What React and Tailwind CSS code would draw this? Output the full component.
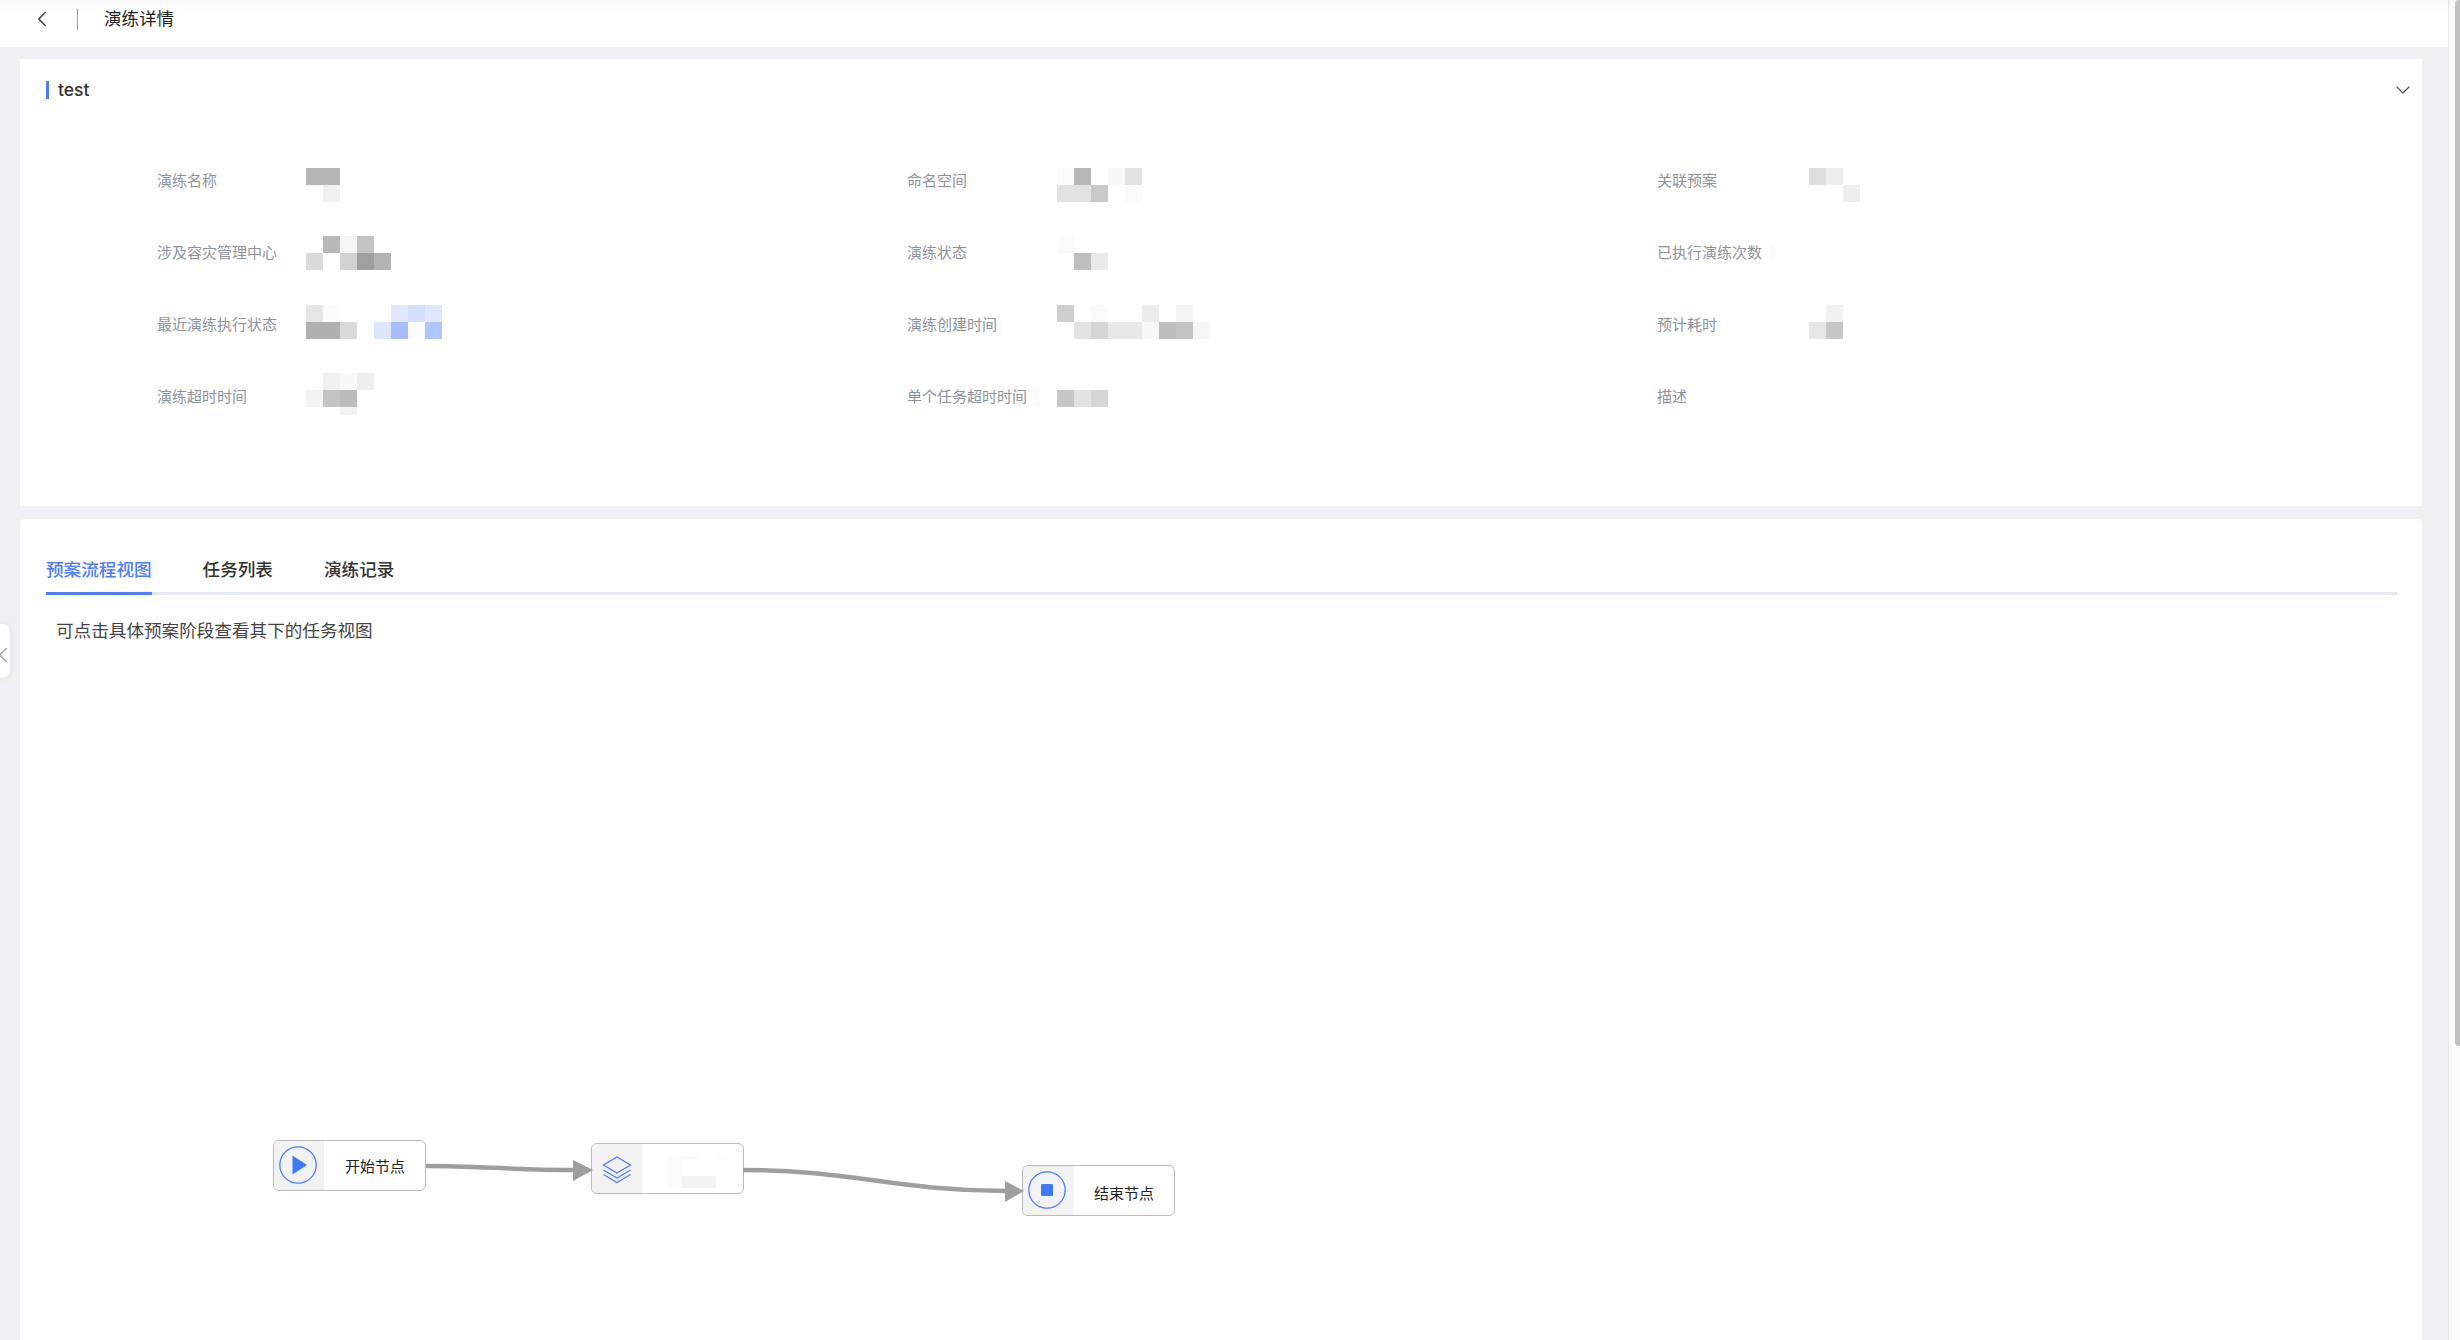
import { ChevronLeft, ChevronDown } from "lucide-react";

const cellColors = {
  _: "bg-transparent",
  a: "bg-[#b5b5b5]",
  b: "bg-[#f0f0f0]",
  c: "bg-[#b8b8b8]",
  d: "bg-[#f6f6f6]",
  e: "bg-[#c3c3c3]",
  f: "bg-[#d9dada]",
  g: "bg-[#d2d2d2]",
  h: "bg-[#9f9f9f]",
  i: "bg-[#b3b3b3]",
  j: "bg-[#e6e6e6]",
  k: "bg-[#fbfbfb]",
  l: "bg-[#dfe8fd]",
  m: "bg-[#d3dffc]",
  n: "bg-[#dfe7fc]",
  o: "bg-[#b0b0b0]",
  p: "bg-[#d8d9d8]",
  q: "bg-[#dde5fb]",
  r: "bg-[#a5bdf8]",
  s: "bg-[#fbfcff]",
  t: "bg-[#aec6fb]",
  u: "bg-[#f8f8f8]",
  v: "bg-[#eeeeee]",
  w: "bg-[#f3f3f3]",
  x: "bg-[#c4c4c4]",
  y: "bg-[#bbbbbb]",
  z: "bg-[#e2e2e2]",
  A: "bg-[#c8c9c8]",
  B: "bg-[#fafafa]",
  C: "bg-[#bebebe]",
  D: "bg-[#eaeaea]",
  E: "bg-[#cfcfcf]",
  F: "bg-[#ececec]",
  G: "bg-[#f4f4f4]",
  H: "bg-[#d6d6d6]",
  I: "bg-[#e8e8e8]",
  J: "bg-[#f7f7f7]",
  K: "bg-[#bdbdbd]",
  L: "bg-[#f5f5f5]",
  M: "bg-[#c6c6c6]",
  N: "bg-[#dedede]",
};

const columns = [
  {
    labelWidth: "w-[149px]",
    items: [
      { label: "演练名称", blocks: ["aa", "_b"], offset: "mt-0" },
      { label: "涉及容灾管理中心", blocks: ["_cde", "f_ghi"], offset: "-mt-1" },
      { label: "最近演练执行状态", blocks: ["jk___lmn", "oop_qrst"], offset: "-mt-[7px]" },
      { label: "演练超时时间", blocks: ["_buv", "wxy", "__w"], offset: "-mt-[11px]", tail: true },
    ],
  },
  {
    labelWidth: "w-[150px]",
    items: [
      { label: "命名空间", blocks: ["kc_uz", "zzA_B"], offset: "mt-0" },
      { label: "演练状态", blocks: ["B", "_CD"], offset: "-mt-1" },
      { label: "演练创建时间", blocks: ["E_B__F_G", "_zHIIJKeL"], offset: "-mt-[7px]" },
      {
        label: "单个任务超时时间",
        blocks: ["_", "MzH"],
        offset: "-mt-[11px]",
        smudge: "left-[126px] top-[3px] h-[17px] w-[7px] bg-[#f9f9f9]",
      },
    ],
  },
  {
    labelWidth: "w-[152px]",
    items: [
      { label: "关联预案", blocks: ["Nv", "__v"], offset: "mt-0" },
      {
        label: "已执行演练次数",
        blocks: [],
        offset: "mt-0",
        smudge: "left-[113px] top-[3px] h-[17px] w-[5px] bg-[#fafafa]",
      },
      { label: "预计耗时", blocks: ["_b", "jM"], offset: "-mt-[7px]" },
      { label: "描述", blocks: [], offset: "mt-0" },
    ],
  },
];

const tabs = ["预案流程视图", "任务列表", "演练记录"];

function Mosaic({ rows, offset, tail }) {
  return (
    <div className={`flex flex-col ${offset}`}>
      {rows.map((row, i) => (
        <div key={i} className={`flex ${tail && i === 2 ? "h-[8px]" : "h-[17px]"}`}>
          {row.split("").map((c, j) => (
            <div key={j} className={`h-full w-[17px] ${cellColors[c]}`} />
          ))}
        </div>
      ))}
    </div>
  );
}

function FlowNode({ pos, label, textPad, children, extra }) {
  return (
    <div
      className={`absolute flex h-[51px] w-[153px] overflow-hidden rounded-[6px] border-[1.5px] border-[#b9b9b9] bg-white ${pos}`}
    >
      <div className="flex w-[50px] shrink-0 items-center justify-center bg-[#f2f2f2]">{children}</div>
      {label && (
        <span className={`ml-[21px] text-[15px] leading-[22px] text-[#222] ${textPad}`}>{label}</span>
      )}
      {extra}
    </div>
  );
}

function PlayIcon() {
  return (
    <svg className="-mt-px -ml-[2px]" width="40" height="40" viewBox="0 0 40 40" fill="none">
      <circle cx="20" cy="20" r="18.2" stroke="#4d7cfe" strokeWidth="1.3" />
      <path d="M14.5 10.5 29 20 14.5 29.5Z" fill="#3f78fc" />
    </svg>
  );
}

function LayersIcon() {
  return (
    <svg width="30" height="30" viewBox="0 0 30 30" fill="none" stroke="#4d7cfe" strokeWidth="1.2">
      <path d="M15 3 28.5 11 15 19 1.5 11Z" />
      <path d="M1.5 16 15 24 28.5 16" />
      <path d="M1.5 20.5 15 28.5 28.5 20.5" />
    </svg>
  );
}

function StopIcon() {
  return (
    <svg className="-mt-px -ml-[2px]" width="40" height="40" viewBox="0 0 40 40" fill="none">
      <circle cx="20" cy="20" r="18.2" stroke="#4d7cfe" strokeWidth="1.3" />
      <rect x="14" y="14" width="12" height="12" rx="1" fill="#3f78fc" />
    </svg>
  );
}

export default function App() {
  return (
    <div className="relative flex h-[1340px] w-[2460px] overflow-hidden bg-[#eef0f5] font-['Inter','Noto_Sans_CJK_SC',sans-serif]">
      <main className="flex w-[2448px] shrink-0 flex-col">
        {/* Top bar */}
        <header className="flex h-[47px] shrink-0 items-center bg-gradient-to-b from-[#f9f9f9] to-white to-[30%] pb-[9px]">
          <ChevronLeft size={26} strokeWidth={1.5} className="ml-[29px] shrink-0 text-[#444]" />
          <div className="ml-[22px] h-[21px] w-px bg-[#9aa1ad]" />
          <h1 className="ml-[26px] text-[17.5px] font-normal leading-[24px] text-[#222]">演练详情</h1>
        </header>

        {/* Basic info card */}
        <section className="mt-[12px] mr-[26px] ml-[20px] h-[447px] shrink-0 bg-white">
          <div className="flex items-center pt-[19px] pr-[7px] pl-[26px]">
            <div className="h-[18px] w-[3px] bg-[#4d7cfe]" />
            <span className="ml-[9px] text-[17.5px] font-medium leading-[22px] text-[#333]">test</span>
            <ChevronDown size={24} strokeWidth={1.2} className="ml-auto shrink-0 text-[#555]" />
          </div>
          <div className="mt-[66px] ml-[137px] grid grid-cols-[750px_750px_750px]">
            {columns.map((col, i) => (
              <div key={i}>
                {col.items.map((item) => (
                  <div key={item.label} className="flex h-[72px] items-start">
                    <span
                      className={`relative mt-[2px] shrink-0 text-[15px] leading-[22px] text-[#8e929e] ${col.labelWidth}`}
                    >
                      {item.label}
                      {item.smudge && <i className={`absolute ${item.smudge}`} />}
                    </span>
                    <Mosaic rows={item.blocks} offset={item.offset} tail={item.tail} />
                  </div>
                ))}
              </div>
            ))}
          </div>
        </section>

        {/* Tabs and flow card */}
        <section className="relative mt-[13px] mr-[26px] ml-[20px] flex-1 rounded-t-[5px] bg-white pr-[25px] pl-[26px]">
          <nav className="mt-[37px] flex h-[39px] gap-[51px] border-b-[3px] border-[#e4e6f0]">
            {tabs.map((tab, i) => (
              <span
                key={tab}
                className={`h-[39px] text-[17.6px] font-medium leading-[27px] ${
                  i === 0 ? "border-b-[3px] border-[#4d7cfe] text-[#4d7cfe]" : "text-[#333]"
                }`}
              >
                {tab}
              </span>
            ))}
          </nav>
          <p className="mt-[23px] ml-[10px] text-[17.6px] leading-[26px] text-[#444]">可点击具体预案阶段查看其下的任务视图</p>

          {/* Flow diagram */}
          <FlowNode pos="top-[621px] left-[253px]" label="开始节点" textPad="mt-[15px]">
            <PlayIcon />
          </FlowNode>
          <FlowNode
            pos="top-[624px] left-[571px]"
            extra={
              <div className="absolute top-[12px] left-[73px] flex h-[32px] w-[60px] flex-col">
                <div className="flex h-[3px]">
                  <i className="w-[34px] bg-[#fafafa]" />
                  <i className="ml-[17px] w-[9px] bg-[#fbfbfb]" />
                </div>
                <i className="h-[17px] w-[17px] bg-[#fafafa]" />
                <div className="flex h-[12px]">
                  <i className="w-[17px] bg-[#fafafa]" />
                  <i className="w-[34px] bg-[#f3f3f3]" />
                </div>
              </div>
            }
          >
            <LayersIcon />
          </FlowNode>
          <FlowNode pos="top-[646px] left-[1002px]" label="结束节点" textPad="mt-[17px]">
            <StopIcon />
          </FlowNode>
          <svg className="absolute top-0 left-0 h-[821px] w-[1100px]" fill="none">
            <path d="M406 647C460 647 490 651 556 651" stroke="#9e9e9e" strokeWidth="4.5" />
            <path d="M553 641 573 651 553 662Z" fill="#9e9e9e" />
            <path d="M723 651C830 651 880 672 987 672" stroke="#9e9e9e" strokeWidth="4.5" />
            <path d="M985 662 1004 672 985 683Z" fill="#9e9e9e" />
          </svg>
        </section>
      </main>

      {/* Page scrollbar */}
      <aside className="flex w-[12px] shrink-0 justify-end border-l border-[#e6e6e6] bg-[#fafafa]">
        <div className="h-[1046px] w-[5px] rounded-l-[4px] bg-[#c1c1c1]" />
      </aside>

      {/* Sidebar collapse handle */}
      <button className="absolute top-[624px] left-0 flex h-[54px] w-[10px] items-center overflow-hidden rounded-r-[8px] bg-white shadow-[0_0_6px_rgba(0,0,0,0.08)]">
        <ChevronLeft size={26} strokeWidth={1.5} className="-ml-[10px] mt-[8px] shrink-0 text-[#aaa]" />
      </button>
    </div>
  );
}
